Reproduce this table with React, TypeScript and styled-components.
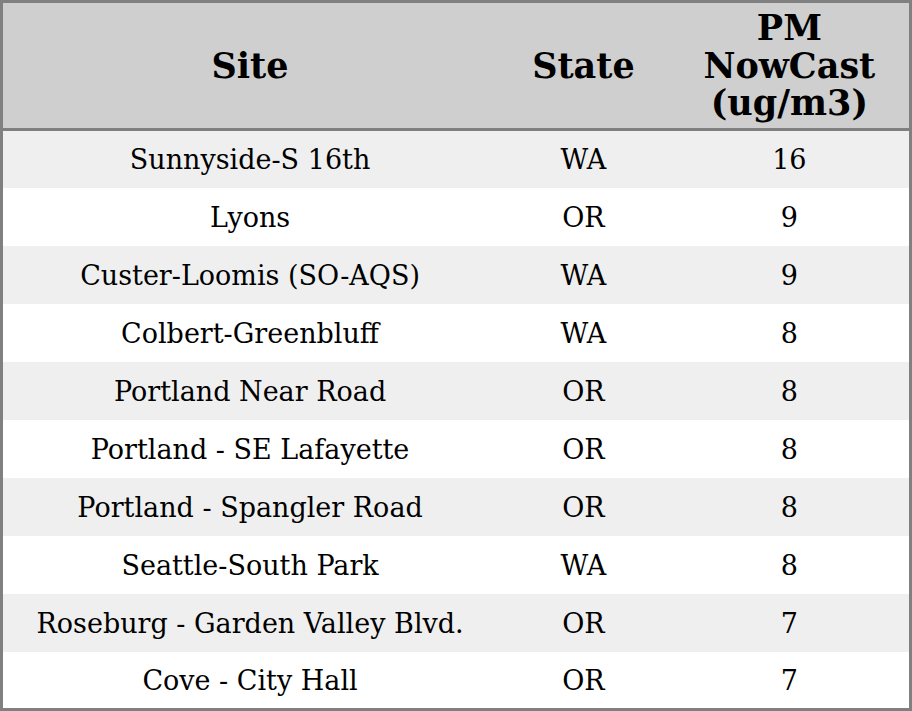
import React from "react";
import styled, { createGlobalStyle } from "styled-components";

const Global = createGlobalStyle`
  html, body { margin: 0; padding: 0; background: #ffffff; }
  body { font-family: "DejaVu Serif", serif; }
`;

const Table = styled.table`
  width: 912px;
  border-collapse: collapse;
  border: 3px solid #808080;
  table-layout: fixed;
  font-family: "DejaVu Serif", serif;
  color: #000;
`;

const HeadCell = styled.th<{ $w: number }>`
  width: ${(p) => p.$w}px;
  height: 128px;
  padding: 0 4px;
  box-sizing: border-box;
  background: #cfcfcf;
  border-bottom: 3px solid #808080;
  font-size: 35px;
  font-weight: bold;
  line-height: 37.5px;
  text-align: center;
  vertical-align: middle;
`;

const Row = styled.tr<{ $shade: boolean }>`
  background: ${(p) => (p.$shade ? "#efefef" : "#ffffff")};
`;

const Cell = styled.td`
  height: 58px;
  padding: 2px 4px 0;
  box-sizing: border-box;
  font-size: 27px;
  line-height: 30px;
  text-align: center;
  vertical-align: middle;
  white-space: nowrap;
`;

const rows: [string, string, number][] = [
  ["Sunnyside-S 16th", "WA", 16],
  ["Lyons", "OR", 9],
  ["Custer-Loomis (SO-AQS)", "WA", 9],
  ["Colbert-Greenbluff", "WA", 8],
  ["Portland Near Road", "OR", 8],
  ["Portland - SE Lafayette", "OR", 8],
  ["Portland - Spangler Road", "OR", 8],
  ["Seattle-South Park", "WA", 8],
  ["Roseburg - Garden Valley Blvd.", "OR", 7],
  ["Cove - City Hall", "OR", 7],
];

export default function App() {
  return (
    <>
      <Global />
      <Table>
        <thead>
          <tr>
            <HeadCell $w={494}>Site</HeadCell>
            <HeadCell $w={172}>State</HeadCell>
            <HeadCell $w={240}>
              PM
              <br />
              NowCast
              <br />
              (ug/m3)
            </HeadCell>
          </tr>
        </thead>
        <tbody>
          {rows.map(([site, state, val], i) => (
            <Row key={site} $shade={i % 2 === 0}>
              <Cell>{site}</Cell>
              <Cell>{state}</Cell>
              <Cell>{val}</Cell>
            </Row>
          ))}
        </tbody>
      </Table>
    </>
  );
}
